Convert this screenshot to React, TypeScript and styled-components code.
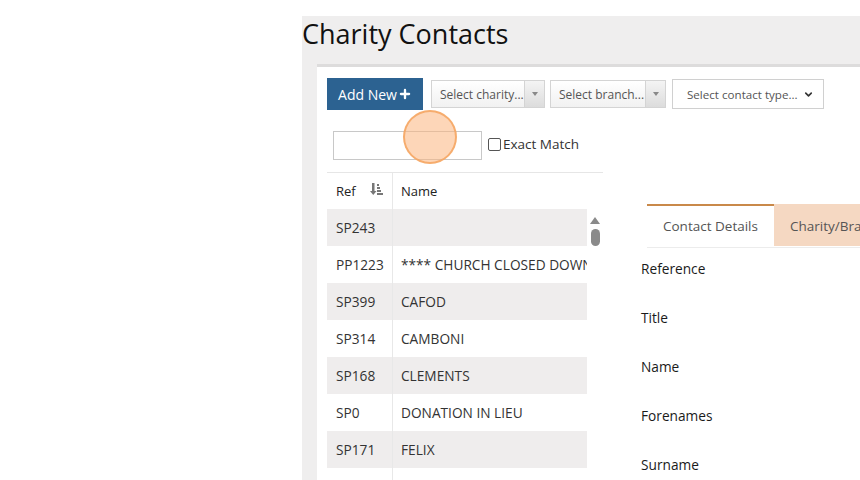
import styled, { createGlobalStyle } from "styled-components";
import { Plus, ChevronDown } from "lucide-react";

const GlobalStyle = createGlobalStyle`
  html, body {
    margin: 0;
    padding: 0;
    background: #ffffff;
    font-family: "Open Sans", "Liberation Sans", sans-serif;
    overflow: hidden;
  }
`;

const Page = styled.div`
  position: relative;
  height: 480px;
  padding: 16px 0 0 302px;
  box-sizing: border-box;
`;

const Content = styled.div`
  background: #efeeee;
  height: 464px;
  display: flex;
  flex-direction: column;
  overflow: hidden;
`;

const Title = styled.h1`
  margin: 0;
  font-size: 27px;
  line-height: 35px;
  font-weight: 400;
  color: #111;
`;

const Panel = styled.div`
  margin: 13px 0 0 15px;
  background: #fff;
  border-top: 3px solid #dddcdc;
  flex: 1;
  padding: 11px 0 0 10px;
  display: flex;
  flex-direction: column;
`;

const Toolbar = styled.div`
  display: flex;
  align-items: center;
  height: 32px;
`;

const AddButton = styled.button`
  width: 96px;
  height: 32px;
  border: none;
  background: #2c6291;
  color: #fff;
  font-family: inherit;
  font-size: 14px;
  display: flex;
  align-items: center;
  justify-content: center;
  gap: 1px;
  padding: 0;
  margin-right: 8px;
`;

const ComboSelect = styled.div<{ $w: number }>`
  width: ${(p) => p.$w}px;
  height: 28px;
  box-sizing: border-box;
  border: 1px solid #d4d4d4;
  background: linear-gradient(#fff, #f1f1f1);
  display: flex;
  align-items: center;
  margin-right: 5px;
  font-size: 12px;
  color: #555;
`;

const ComboText = styled.span`
  flex: 1;
  padding-left: 8px;
  white-space: nowrap;
  overflow: hidden;
`;

const ComboArrow = styled.span`
  width: 19px;
  height: 100%;
  border-left: 1px solid #d4d4d4;
  background: linear-gradient(#f4f4f4, #dcdcdc);
  display: flex;
  align-items: center;
  justify-content: center;
  &::after {
    content: "";
    border-left: 3px solid transparent;
    border-right: 3px solid transparent;
    border-top: 4px solid #888;
  }
`;

const PlainSelect = styled.div`
  width: 152px;
  height: 30px;
  box-sizing: border-box;
  border: 1px solid #d0d0d0;
  display: flex;
  align-items: center;
  justify-content: space-between;
  padding: 0 9px 0 14px;
  font-size: 11.6px;
  color: #555;
  margin-left: 1px;
  white-space: nowrap;
`;

const SearchRow = styled.div`
  display: flex;
  align-items: center;
  margin: 21px 0 0 6px;
  height: 29px;
`;

const SearchInput = styled.div`
  width: 149px;
  height: 29px;
  box-sizing: border-box;
  border: 1px solid #c8c8c8;
`;

const CheckLabel = styled.label`
  display: flex;
  align-items: center;
  margin-left: 6px;
  font-size: 13.5px;
  color: #333;
  margin-top: -3px;
`;

const CheckBox = styled.span`
  width: 11px;
  height: 11px;
  border: 1px solid #555;
  border-radius: 2px;
  margin-right: 2px;
`;

const Body = styled.div`
  display: flex;
  margin-top: 12px;
`;

const Table = styled.div`
  width: 276px;
  display: flex;
  flex-direction: column;
`;

const HeadRow = styled.div`
  display: grid;
  grid-template-columns: 66px 1fr;
  height: 36px;
  border-top: 1px solid #e6e6e6;
  font-size: 13px;
  color: #222;
`;

const Cell = styled.div<{ $first?: boolean }>`
  display: flex;
  align-items: center;
  padding-left: ${(p) => (p.$first ? 9 : 8)}px;
  border-right: ${(p) => (p.$first ? "1px solid #e8e8e8" : "none")};
  white-space: nowrap;
  overflow: hidden;
  justify-content: ${(p) => (p.$first ? "space-between" : "flex-start")};
`;

const Scroller = styled.div`
  display: flex;
`;

const Rows = styled.div`
  flex: 1;
`;

const Row = styled.div<{ $alt: boolean }>`
  display: grid;
  grid-template-columns: 66px 194px;
  height: 37px;
  background: ${(p) => (p.$alt ? "#efeded" : "#fff")};
  font-size: 13.7px;
  color: #333;
`;

const ScrollBar = styled.div`
  width: 16px;
  display: flex;
  flex-direction: column;
  align-items: center;
  padding-top: 8px;
  gap: 5px;
`;

const ScrollUp = styled.span`
  border-left: 5px solid transparent;
  border-right: 5px solid transparent;
  border-bottom: 7px solid #8a8a8a;
`;

const Thumb = styled.span`
  width: 9px;
  height: 17px;
  border-radius: 5px;
  background: #8a8a8a;
`;

const Details = styled.div`
  flex: 1;
  margin: 32px 0 0 38px;
`;

const Tabs = styled.div`
  display: flex;
  margin-left: 6px;
  border-bottom: 1px solid #ececec;
  height: 43px;
`;

const Tab = styled.div<{ $active?: boolean }>`
  height: 42px;
  box-sizing: border-box;
  padding: 0 16px;
  display: flex;
  align-items: center;
  font-size: 13.5px;
  color: #555;
  white-space: nowrap;
  background: ${(p) => (p.$active ? "#fff" : "#f5d8c2")};
  border-top: 2px solid ${(p) => (p.$active ? "#c9894a" : "#f5d8c2")};
`;

const Field = styled.div`
  height: 49px;
  display: flex;
  align-items: center;
  font-size: 13.7px;
  color: #1a1a1a;
`;

const Fields = styled.div`
  margin-top: -4px;
`;

const Cursor = styled.div`
  position: absolute;
  left: 403px;
  top: 110px;
  width: 50px;
  height: 50px;
  border-radius: 50%;
  background: rgba(251, 180, 125, 0.55);
  border: 2px solid rgba(244, 164, 96, 0.85);
  pointer-events: none;
`;

function SortIcon() {
  return (
    <svg width="13" height="13" viewBox="0 0 13 13" fill="#777">
      <rect x="2" y="0" width="2.5" height="9" />
      <polygon points="0,8 6.5,8 3.25,12" />
      <rect x="7" y="1" width="2" height="2" />
      <rect x="7" y="4" width="3" height="2" />
      <rect x="7" y="7" width="4" height="2" />
      <rect x="7" y="10" width="6" height="2" />
    </svg>
  );
}

const rows = [
  ["SP243", ""],
  ["PP1223", "**** CHURCH CLOSED DOWN"],
  ["SP399", "CAFOD"],
  ["SP314", "CAMBONI"],
  ["SP168", "CLEMENTS"],
  ["SP0", "DONATION IN LIEU"],
  ["SP171", "FELIX"],
  ["", ""],
];

const fields = ["Reference", "Title", "Name", "Forenames", "Surname"];

export default function App() {
  return (
    <>
      <GlobalStyle />
      <Page>
        <Content>
          <Title>Charity Contacts</Title>
          <Panel>
            <Toolbar>
              <AddButton>
                Add New
                <Plus size={14} strokeWidth={4} />
              </AddButton>
              <ComboSelect $w={114}>
                <ComboText>Select charity...</ComboText>
                <ComboArrow />
              </ComboSelect>
              <ComboSelect $w={116}>
                <ComboText>Select branch...</ComboText>
                <ComboArrow />
              </ComboSelect>
              <PlainSelect>
                <span>Select contact type...</span>
                <ChevronDown size={11} strokeWidth={3.5} color="#333" />
              </PlainSelect>
            </Toolbar>
            <SearchRow>
              <SearchInput />
              <CheckLabel>
                <CheckBox />
                Exact Match
              </CheckLabel>
            </SearchRow>
            <Body>
              <Table>
                <HeadRow>
                  <Cell $first>
                    Ref
                    <span style={{ marginRight: 9 }}>
                      <SortIcon />
                    </span>
                  </Cell>
                  <Cell>Name</Cell>
                </HeadRow>
                <Scroller>
                  <Rows>
                    {rows.map(([ref, name], i) => (
                      <Row key={i} $alt={i % 2 === 0}>
                        <Cell $first>{ref}</Cell>
                        <Cell>{name}</Cell>
                      </Row>
                    ))}
                  </Rows>
                  <ScrollBar>
                    <ScrollUp />
                    <Thumb />
                  </ScrollBar>
                </Scroller>
              </Table>
              <Details>
                <Tabs>
                  <Tab $active>Contact Details</Tab>
                  <Tab>Charity/Branch Details</Tab>
                </Tabs>
                <Fields>
                  {fields.map((f) => (
                    <Field key={f}>{f}</Field>
                  ))}
                </Fields>
              </Details>
            </Body>
          </Panel>
        </Content>
        <Cursor />
      </Page>
    </>
  );
}
